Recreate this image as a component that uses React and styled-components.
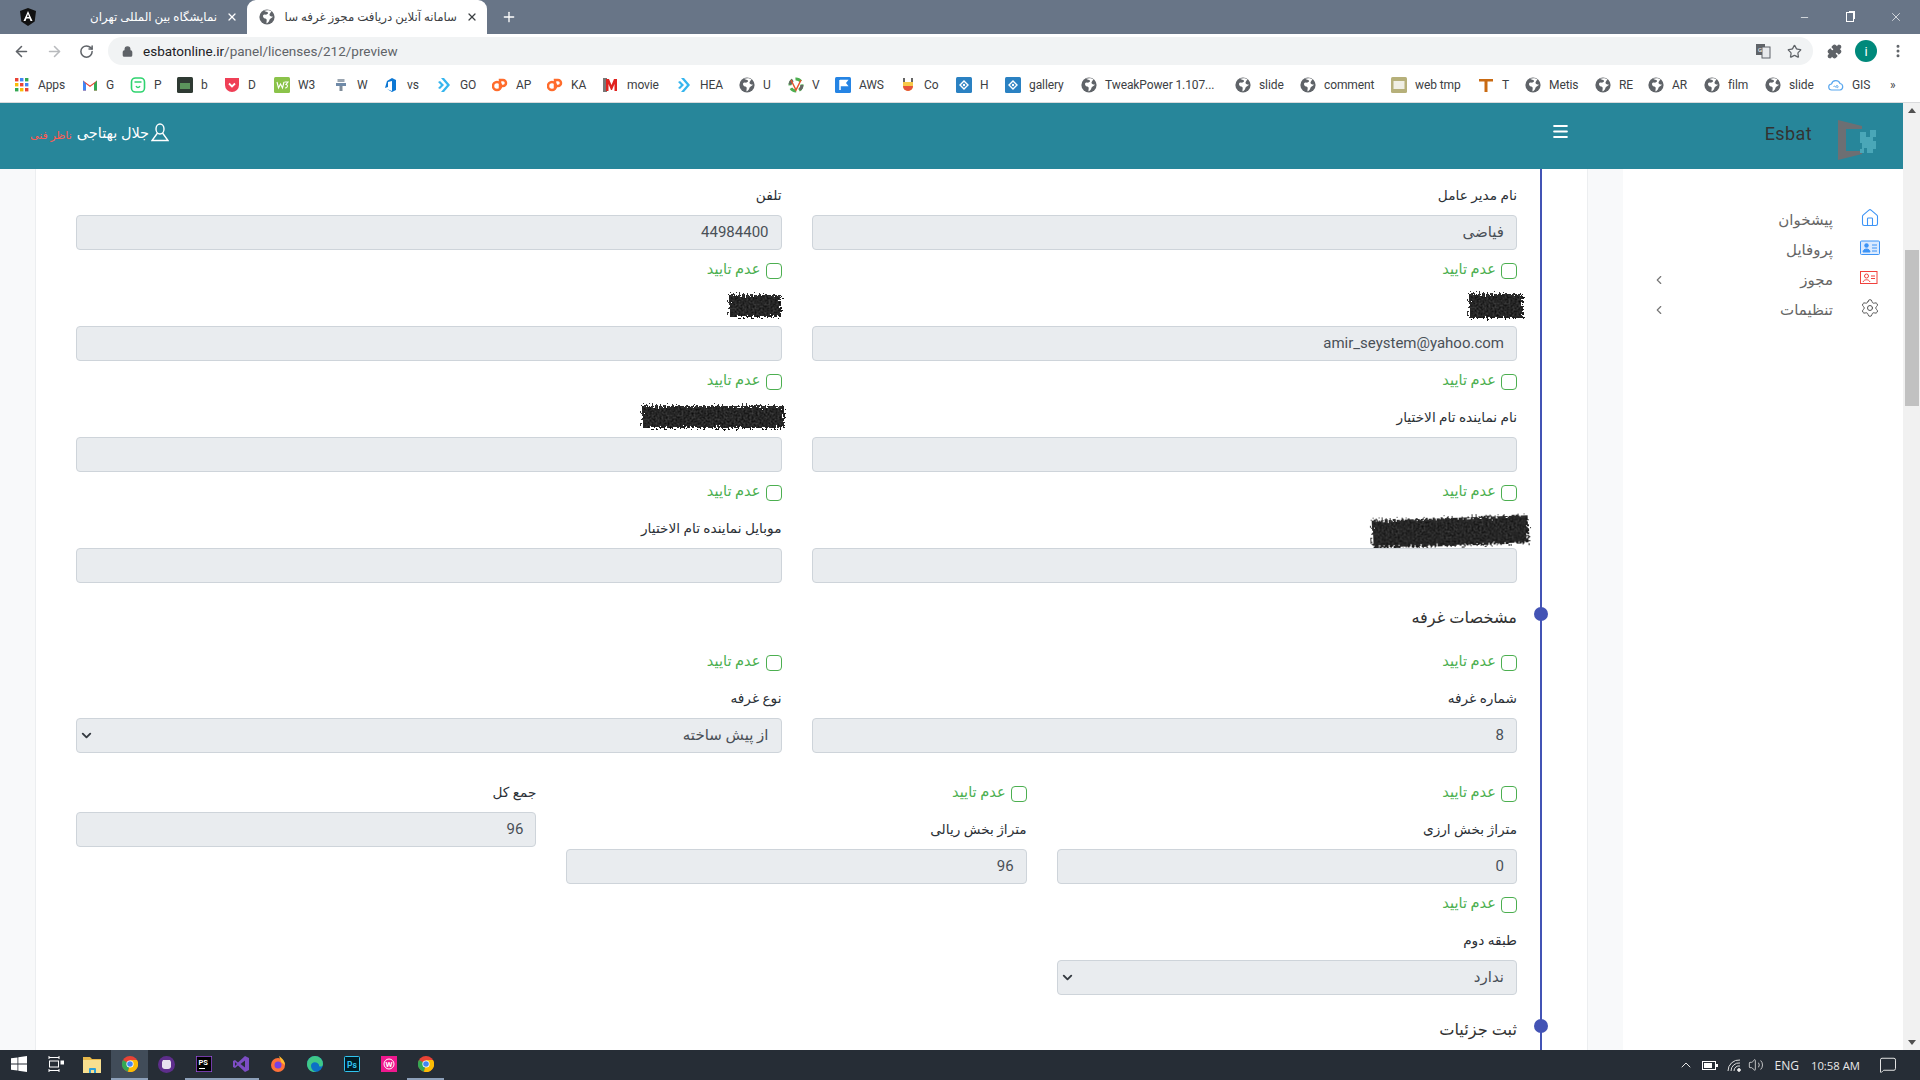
import React from "react";
import styled, { createGlobalStyle } from "styled-components";
import { ArrowLeft, ArrowRight, RotateCw, Lock, Star, Puzzle, EllipsisVertical, Plus, X, Minus, Menu, ChevronLeft, ChevronDown, ChevronUp, Settings, Home, Volume2, MessageSquare } from "lucide-react";

const Global = createGlobalStyle`
  html, body { margin: 0; padding: 0; background: #fff; overflow: hidden; }
  * { box-sizing: border-box; }
  body { font-family: Roboto, "DejaVu Sans", sans-serif; }
`;
const FA = `Roboto, "DejaVu Sans", sans-serif`;

const Screen = styled.div`width: 1920px; height: 1080px; display: flex; flex-direction: column; overflow: hidden;`;
const TabStrip = styled.div`height: 34px; background: #687587; display: flex; align-items: center; flex: none; color: #fff;`;
const Tab = styled.div`
  position: relative; width: ${p => p.$w}px; height: 34px; display: flex; align-items: center; padding: 0 9px 0 ${p => p.$pl}px; gap: 9px;
  border-radius: 9px 9px 0 0; background: ${p => p.$active ? "#fff" : "transparent"}; color: ${p => p.$active ? "#3c4043" : "#fff"};
`;
const TabTitle = styled.div`flex: 1; direction: rtl; white-space: nowrap; overflow: hidden; font: 11.8px ${FA}; text-align: right; line-height: 34px;`;
const NewTab = styled.div`margin-left: 13px; width: 18px; display: flex; justify-content: center;`;
const WindowControls = styled.div`margin-left: auto; display: flex; height: 34px; align-items: center; padding-right: 1px;`;
const WinBtn = styled.div`width: 46px; display: flex; justify-content: center; align-items: center;`;
const Restore = styled.div`width: 8px; height: 10px; border: 1px solid #fff; box-shadow: 2px -2px 0 -1px #fff;`;

const Toolbar = styled.div`height: 34px; flex: none; background: #fff; display: flex; align-items: center; padding-left: 13px; color: #5f6368;`;
const NavGroup = styled.div`display: flex; gap: 16px; width: 95px; align-items: center;`;
const Omnibox = styled.div`width: 1705px; height: 28px; border-radius: 14px; background: #f1f3f4; display: flex; align-items: center; padding: 0 11px 0 14px; font: 13.5px Roboto, sans-serif; color: #5f6368; gap: 10px;`;
const UrlHost = styled.span`color: #202124;`;
const OmniRight = styled.div`margin-left: auto; display: flex; gap: 16px; align-items: center;`;
const ToolRight = styled.div`display: flex; align-items: center; gap: 13px; margin-left: 14px;`;
const Avatar = styled.div`width: 22px; height: 22px; border-radius: 50%; background: #00897b; color: #fff; font: 13px Roboto, sans-serif; display: flex; align-items: center; justify-content: center;`;

const BookmarkBar = styled.div`height: 35px; flex: none; background: #fff; border-bottom: 1px solid #d9dadc; display: flex; align-items: center; padding: 0 0 1px 14px; font: 12px Roboto, sans-serif; color: #3c4043;`;
const Bookmark = styled.div`width: ${p => p.$w}px; flex: none; display: flex; align-items: center; gap: 8px; white-space: nowrap; overflow: hidden; letter-spacing: -0.1px;`;

const Viewport = styled.div`flex: 1; min-height: 0; display: flex;`;
const Page = styled.div`flex: 1; min-width: 0; display: flex; flex-direction: column;`;
const Header = styled.header`height: 66px; flex: none; background: #27869a; display: flex; align-items: flex-start; position: relative;`;
const UserBlock = styled.div`margin-left: 30px; margin-top: 18px; display: flex; align-items: center; gap: 2px; height: 22px;`;
const UserName = styled.span`direction: rtl; font: 14.5px ${FA}; color: #fff; display: inline-flex; gap: 5px; white-space: nowrap; padding-top: 3px;`;
const UserRole = styled.span`color: #ff5b52; font-size: 11px; align-self: flex-end;`;
const HeaderRight = styled.div`margin-left: auto; display: flex; align-items: center; height: 100%;`;
const Burger = styled.div`color: #fff; margin-right: 195px; margin-top: -9px; display: flex;`;
const Brand = styled.div`font: 18px Roboto, sans-serif; color: #333; letter-spacing: .4px; margin-right: 26px; margin-top: -6px;`;
const LogoBox = styled.div`margin-right: 25px; margin-top: 8px; display: flex;`;

const Body = styled.div`flex: 1; min-height: 0; display: flex; background: #f8f9fa; padding-left: 35px; overflow: hidden;`;
const Card = styled.main`width: 1553px; flex: none; background: #fff; border-left: 1px solid #eceef0; border-right: 1px solid #eceef0; padding: 0 45px 0 40px; height: 100%;`;
const Form = styled.div`direction: rtl; border-right: 2px solid #4353b5; padding: 5px 23px 0 0; height: 100%; width: 1466px; display: flex; flex-direction: column;`;
const Row = styled.div`display: grid; grid-template-columns: ${p => p.$cols === 3 ? "1fr 1fr 1fr" : "1fr 1fr"}; column-gap: 30px; margin-top: ${p => p.$gap || 0}px; flex: none;`;
const Column = styled.div`display: flex; flex-direction: column;`;
const CheckLine = styled.label`margin-top: 5px; height: 30px; display: flex; align-items: center; gap: 5px; color: #4caf50; font: 14.6px ${FA};`;
const CheckText = styled.span`margin-top: -3px;`;
const Box = styled.span`width: 16px; height: 16px; border: 1px solid #4caf50; border-radius: 4px; background: #fff; margin-top: 2px;`;
const Label = styled.div`margin-top: ${p => p.$compact ? 7 : 9}px; margin-bottom: 8px; height: 24px; font: 13.7px/24px ${FA}; color: #2b3036; display: flex; align-items: center;`;
const Input = styled.div`height: 35px; background: #e9ecef; border: 1px solid #ced4da; border-radius: 4px; padding: 0 12px 2px; display: flex; align-items: center; color: #495057; font: 15px ${FA}; position: relative;`;
const LtrValue = styled.span`direction: ltr;`;
const SelectArrow = styled.span`position: absolute; left: 2px; top: 9px; display: flex; color: #343a40;`;
const SectionTitle = styled.h3`position: relative; margin: 17px 0 6px; height: 36px; font: 400 16.2px/36px ${FA}; color: #333;`;
const Dot = styled.span`position: absolute; right: -31px; top: 7px; width: 14px; height: 14px; border-radius: 50%; background: #4353b5;`;
const ScribbleArt = styled.svg`flex: none; margin-right: ${p => p.$mr}px; transform: rotate(${p => p.$rot || 0}deg) translateY(${p => p.$dy || 0}px);`;

const Sidebar = styled.aside`flex: none; width: 280px; margin-left: 35px; background: #fff; padding: 36px 17px 0 29px; direction: rtl; height: 100%;`;
const NavItem = styled.div`height: 30px; display: flex; align-items: center; color: #666; font: 15px ${FA};`;
const NavIcon = styled.span`width: 26px; margin: 0 3px 5px 24px; display: flex; justify-content: center;`;
const NavChevron = styled.span`margin-right: auto; display: flex; color: #777;`;

const Scrollbar = styled.div`width: 17px; flex: none; background: #f1f1f1; display: flex; flex-direction: column; position: relative; align-items: center; justify-content: space-between; padding: 5px 0; color: #505050;`;
const Thumb = styled.div`position: absolute; left: 2px; right: 1px; top: 147px; height: 156px; background: #c1c1c1;`;
const Arrow = styled.div`width: 0; height: 0; border-left: 4px solid transparent; border-right: 4px solid transparent; ${p => p.$up ? "border-bottom: 5px solid #505050;" : "border-top: 5px solid #505050;"}`;

const Taskbar = styled.footer`height: 30px; flex: none; background: #262d36; display: flex; align-items: center; color: #fff;`;
const TaskBtn = styled.div`width: 37px; height: 30px; flex: none; display: flex; align-items: center; justify-content: center; background: ${p => p.$active ? "#414c59" : "transparent"}; border-bottom: 2px solid ${p => p.$running ? "#8da0b9" : "transparent"};`;
const Tray = styled.div`margin-left: auto; display: flex; align-items: center; font: 12px "Open Sans", Roboto, sans-serif; color: #e8e8e8; height: 100%;`;
const TrayItem = styled.span`display: flex; align-items: center; margin-left: ${p => p.$ml || 0}px; font-size: ${p => p.$fs || 12}px;`;

const Globe = ({ s = 16 }) => (
  <svg width={s} height={s} viewBox="0 0 16 16" style={{ flex: "none" }}>
    <circle cx="8" cy="8" r="7.6" fill="#5f6368" />
    <path d="M5 1.5c1 1.5 3.5 1 4 2.3S7 6 6 5.6 3.5 6 4.2 8s2.6 1 3.3 2.3-.6 3.5.3 4.2c1-.8 2.5-2 2.6-3.4s2-1.4 3.6-3.3c-1-.3-2.6-.2-3.3-1.3s.5-2.5 1.8-4c-2-1.6-5-1.7-7.5-.5z" fill="#fff" />
  </svg>
);
const Sq = ({ c, children }) => <svg width="16" height="16" viewBox="0 0 16 16" style={{ flex: "none" }}><rect width="16" height="16" rx="1.5" fill={c} />{children}</svg>;
const Svg = ({ children, s = 16, v = 16 }) => <svg width={s} height={s} viewBox={`0 0 ${v} ${v}`} style={{ flex: "none" }}>{children}</svg>;
const COLS = ["#ea4335", "#4285f4", "#34a853", "#fbbc05", "#ea4335", "#4285f4", "#34a853", "#fbbc05", "#ea4335"];

const ICONS = {
  apps: <Svg>{COLS.map((c, i) => <rect key={i} x={1 + (i % 3) * 5} y={1 + Math.floor(i / 3) * 5} width="3.4" height="3.4" fill={c} />)}</Svg>,
  gmail: <Svg><path d="M1 3.5v10h3V7l4 3 4-3v6.500h3v-10L8 8.500z" fill="#ea4335" /><path d="M1 3.500v10h3V7z" fill="#4285f4" /><path d="M12 7v6.500h3v-10z" fill="#34a853" /></Svg>,
  p: <Svg><rect x="1.500" y="1" width="13" height="14" rx="4" fill="none" stroke="#2fd36f" strokeWidth="1.600" /><path d="M4.500 5h7M6 9c1 2 3 2 4 0" stroke="#2fd36f" strokeWidth="1.300" fill="none" /></Svg>,
  b: <Sq c="#2f3a33"><rect x="3" y="6" width="10" height="6" fill="#6dbb6d" opacity=".7" /></Sq>,
  d: <Svg><path d="M1 1h14v7a7 7 0 0 1-14 0z" fill="#ef3f56" /><path d="M5 6.500l3 3 3-3" fill="none" stroke="#fff" strokeWidth="1.800" /></Svg>,
  w3: <Sq c="#8bc34a"><path d="M3 5l1.500 6 2-4 2 4L10 5M10.500 5H14l-2 2.500c2 0 2 3.500-1 3.500" fill="none" stroke="#fff" strokeWidth="1.100" /></Sq>,
  w: <Svg><rect x="4.500" y="2" width="7" height="3" fill="#9aa5b1" /><rect x="3" y="6" width="10" height="3" fill="#6f8aa8" /><rect x="6.500" y="9" width="3" height="5" fill="#7f8c99" /></Svg>,
  vs: <Svg><path d="M9 1L4 4 2 11l3-1V5l4-1v10l-5-2 5 3 4-2V3z" fill="#0d78d4" /></Svg>,
  go: <Svg><path d="M5 1l6 7-6 7 3 0 6-7-6-7zM2 5l3 3-3 3 2 1 4-4-4-4z" fill="#35b5ee" /></Svg>,
  cp: <Svg><circle cx="5" cy="9" r="4" fill="none" stroke="#ff6c2c" strokeWidth="2.500" /><path d="M8 11V3h3a3 3 0 0 1 0 6H9" fill="none" stroke="#ff6c2c" strokeWidth="2.500" /></Svg>,
  movie: <Svg><rect x="0" y="1" width="4" height="14" fill="#777" /><path d="M3 14V2h3l2.500 6L11 2h3v12h-2.500V7L9 13H8L5.500 7v7z" fill="#e0231f" /></Svg>,
  globe: <Globe />,
  v: <Svg><circle cx="8" cy="8" r="6" fill="none" stroke="#4caf50" strokeWidth="3" strokeDasharray="6 3" /><circle cx="8" cy="8" r="6" fill="none" stroke="#666" strokeWidth="3" strokeDasharray="5 14" /><path d="M3 3l5 10 5-10" fill="none" stroke="#e4572e" strokeWidth="1.500" /></Svg>,
  aws: <Sq c="#2584e4"><path d="M5 3v10M5 3.500h7l-2 2.500 2 2.500H5" stroke="#fff" strokeWidth="1.500" fill="#fff" /></Sq>,
  co: <Svg><path d="M3 5h10v4a5 5 0 0 1-10 0z" fill="#f7c948" /><path d="M3 9h10a5 5 0 0 1-10 0z" fill="#e5533d" /><path d="M4 1v4M12 1v4" stroke="#333" strokeWidth="1.500" /></Svg>,
  h: <Sq c="#2a81c2"><path d="M8 4l4 4-4 4-4-4z" fill="none" stroke="#fff" strokeWidth="1.400" /><circle cx="8" cy="8" r="1.200" fill="#fff" /></Sq>,
  css: <Sq c="#b6b07a"><rect x="2.500" y="4" width="11" height="8" fill="#fff" opacity=".8" /></Sq>,
  t: <Svg><path d="M1 2h14v2.500H9.500V15h-3V4.500H1z" fill="#c96a12" /></Svg>,
  gis: <Svg><path d="M4 13a3 3 0 0 1-.5-6A4.500 4.500 0 0 1 12 6.500 3.300 3.300 0 0 1 12 13z" fill="none" stroke="#5aa7ee" strokeWidth="1.200" /><path d="M5.500 9.500c1-1.500 2 1.500 2.500 0s1.500-1.500 2 0-1.500 1.500-2 0" fill="none" stroke="#5aa7ee" /></Svg>,
};

const BOOKMARKS = [
  ["apps", "Apps", 68], ["gmail", "G", 48], ["p", "P", 47], ["b", "b", 47], ["d", "D", 50], ["w3", "W3", 59], ["w", "W", 50],
  ["vs", "vs", 53], ["go", "GO", 56], ["cp", "AP", 55], ["cp", "KA", 56], ["movie", "movie", 73], ["go", "HEA", 63], ["globe", "U", 49],
  ["v", "V", 47], ["aws", "AWS", 65], ["co", "Co", 56], ["h", "H", 49], ["h", "gallery", 76], ["globe", "TweakPower 1.107...", 154],
  ["globe", "slide", 65], ["globe", "comment", 91], ["css", "web tmp", 87], ["t", "T", 47], ["globe", "Metis", 70], ["globe", "RE", 53],
  ["globe", "AR", 56], ["globe", "film", 61], ["globe", "slide", 63], ["gis", "GIS", 62],
];

const Scribble = ({ id, w, h, mr = 0, rot, dy }) => (
  <ScribbleArt width={w} height={h} viewBox={`0 0 ${w} ${h}`} $mr={mr} $rot={rot} $dy={dy}>
    <defs>
      <filter id={id} x="-5%" y="-30%" width="110%" height="160%">
        <feTurbulence type="fractalNoise" baseFrequency="0.5" numOctaves="2" seed="4" result="n" />
        <feDisplacementMap in="SourceGraphic" in2="n" scale="11" result="d" />
        <feComposite in="d" in2="n" operator="arithmetic" k1="0" k2="1" k3="-0.3" k4="0" />
        <feGaussianBlur stdDeviation="0.7" />
      </filter>
    </defs>
    <rect x="4" y="5" width={w - 8} height={h - 10} fill="#000" filter={`url(#${id})`} />
  </ScribbleArt>
);

const Check = () => <CheckLine><Box /><CheckText>عدم تایید</CheckText></CheckLine>;

const Field = ({ label, value, ltr, check = true, select, scribble, compact }) => (
  <Column>
    {check && <Check />}
    <Label $compact={compact}>{scribble || label}</Label>
    <Input>
      {ltr ? <LtrValue>{value}</LtrValue> : value}
      {select && <SelectArrow><ChevronDown size={15} strokeWidth={3} /></SelectArrow>}
    </Input>
  </Column>
);

const Logo = () => (
  <svg width="40" height="40" viewBox="0 0 40 40">
    <path d="M0 0l24 6v3H8v22h16v3L0 40z" fill="#6d6f73" />
    <path d="M22 12h6v5h4v-7h6v7h-3v4h3v8h-3v4h-6v-5h-3v5h-4v-4h2v-6h-2z" fill="#4aa7b8" />
  </svg>
);

const CardIcon = ({ color, person }) => (
  <svg width="20" height={person ? 14 : 16} viewBox={person ? "0 0 20 14" : "0 0 20 16"}>
    {person ? <>
      <rect x=".5" y=".5" width="16.500" height="12" fill="none" stroke={color} />
      <circle cx="6.500" cy="5" r="2" fill="none" stroke={color} />
      <path d="M3 11c1-3 6-3 7 0M11 5h4M11 7.500h4" fill="none" stroke={color} />
    </> : <>
      <rect x=".5" y="1" width="19" height="13.500" rx="1" fill="#dbeafe" stroke={color} />
      <circle cx="6.500" cy="5.500" r="2.200" fill={color} />
      <path d="M3 12c0-4 7-4 7 0zM12 5h5M12 8h5M12 11h5" fill={color} stroke={color} />
    </>}
  </svg>
);

const Chrome = () => (
  <svg width="16" height="16" viewBox="0 0 16 16">
    <circle cx="8" cy="8" r="8" fill="#ea4335" />
    <path d="M8 8L1 4A8 8 0 0 0 6 15.800z" fill="#34a853" />
    <path d="M8 8l-2 7.800A8 8 0 0 0 15 4H8z" fill="#fbbc05" />
    <circle cx="8" cy="8" r="3.600" fill="#fff" /><circle cx="8" cy="8" r="2.800" fill="#4285f4" />
  </svg>
);

const TASK = [
  { k: "folder", el: <svg width="20" height="17" viewBox="0 0 20 17"><path d="M0 1h7l2 2h9v3H0z" fill="#e8b94a" /><rect y="4" width="18" height="13" fill="#f8df8f" /><path d="M6 17v-4a1 1 0 0 1 1-1h5a1 1 0 0 1 1 1v4h-2v-3H8v3z" fill="#2d9fd8" /></svg> },
  { k: "chrome", active: true, running: true, el: <Chrome /> },
  { k: "tor", el: <svg width="17" height="17" viewBox="0 0 17 17"><circle cx="8.500" cy="8.500" r="8.500" fill="#5e2e8c" /><path d="M4 6l1-2h7l1 2v5a3 3 0 0 1-3 2H7a3 3 0 0 1-3-2z" fill="#e6e1ee" /></svg> },
  { k: "php", running: true, el: <svg width="16" height="16" viewBox="0 0 16 16"><rect width="16" height="16" fill="#000" stroke="#9a4fe0" strokeWidth="1.500" /><text x="2.500" y="9" fontSize="7.500" fontFamily="Roboto" fontWeight="700" fill="#fff">PS</text><rect x="3" y="12" width="6" height="1" fill="#fff" /></svg> },
  { k: "vs", running: true, el: <svg width="16" height="16" viewBox="0 0 16 16"><path d="M12 0l4 2v12l-4 2L5 9.500 2 12 0 11V5l2-1 3 2.500z" fill="#7c4dc4" /><path d="M12 4.500L7.500 8l4.500 3.500z" fill="#262d36" /><path d="M2 6l2 2-2 2z" fill="#262d36" /></svg> },
  { k: "ff", el: <svg width="16" height="16" viewBox="0 0 16 16"><circle cx="8" cy="9" r="7" fill="#ff7139" /><circle cx="8" cy="9" r="3.500" fill="#7542e5" /><path d="M9 0c3 2 6 5 6 9l-4-3c0-2-1-3-2-6z" fill="#ffbd2e" /></svg> },
  { k: "edge", el: <svg width="16" height="16" viewBox="0 0 16 16"><circle cx="8" cy="8" r="8" fill="#0c70c6" /><path d="M0 8a8 8 0 0 1 16 0c0 3-3 3-4 2 1-4-8-6-8 0 0 3 3 6 6 6C4 17 0 13 0 8z" fill="#3fc888" /></svg> },
  { k: "ps", el: <svg width="16" height="16" viewBox="0 0 16 16"><rect x=".5" y=".5" width="15" height="15" rx="1" fill="#001d26" stroke="#31c5f0" /><text x="3" y="11.500" fontSize="8.500" fontFamily="Roboto" fontWeight="700" fill="#31c5f0">Ps</text></svg> },
  { k: "wamp", el: <svg width="16" height="16" viewBox="0 0 16 16"><rect width="16" height="16" fill="#f0188f" /><circle cx="8" cy="8" r="5" fill="none" stroke="#fff" /><text x="4.500" y="11" fontSize="8" fontFamily="Roboto" fontWeight="700" fill="#fff">W</text></svg> },
  { k: "chrome2", running: true, el: <Chrome /> },
];

export default function App() {
  return (
    <Screen>
      <Global />
      <TabStrip>
        <Tab $w={247} $pl={20}>
          <svg width="16" height="18" viewBox="0 0 16 18"><path d="M8 0l8 3-1.300 10.500L8 18l-6.700-4.500L0 3z" fill="#111" /><path d="M8 3L3.500 13h2l1-2.500h3l1 2.500h2zM7 9l1-3 1 3z" fill="#fff" /></svg>
          <TabTitle>نمایشگاه بین المللی تهران</TabTitle>
          <X size={12} strokeWidth={2.500} />
        </Tab>
        <Tab $w={240} $active $pl={12}>
          <Globe />
          <TabTitle>سامانه آنلاین دریافت مجوز غرفه سا</TabTitle>
          <X size={12} strokeWidth={2.500} />
        </Tab>
        <NewTab><Plus size={16} strokeWidth={2} /></NewTab>
        <WindowControls>
          <WinBtn><Minus size={11} strokeWidth={1.500} /></WinBtn>
          <WinBtn><Restore /></WinBtn>
          <WinBtn><X size={14} strokeWidth={1.200} /></WinBtn>
        </WindowControls>
      </TabStrip>

      <Toolbar>
        <NavGroup>
          <ArrowLeft size={17} strokeWidth={2.200} />
          <ArrowRight size={17} strokeWidth={2.200} color="#b8babd" />
          <RotateCw size={15} strokeWidth={2.400} />
        </NavGroup>
        <Omnibox>
          <Lock size={11} strokeWidth={3} fill="#5f6368" />
          <span><UrlHost>esbatonline.ir</UrlHost>/panel/licenses/212/preview</span>
          <OmniRight>
            <svg width="16" height="16" viewBox="0 0 16 16"><rect x="1" y="1" width="9" height="11" fill="#5f6368" /><rect x="7" y="4" width="8" height="11" fill="#e8eaed" stroke="#5f6368" /><text x="3" y="9" fontSize="6" fill="#fff" fontFamily="Roboto">G</text></svg>
            <Star size={15} strokeWidth={2} />
          </OmniRight>
        </Omnibox>
        <ToolRight>
          <Puzzle size={15} fill="#5f6368" />
          <Avatar>i</Avatar>
          <EllipsisVertical size={16} strokeWidth={2.500} />
        </ToolRight>
      </Toolbar>

      <BookmarkBar>
        {BOOKMARKS.map(([icon, text, w], i) => (
          <Bookmark key={i} $w={w}>{ICONS[icon]}<span>{text}</span></Bookmark>
        ))}
        <span>»</span>
      </BookmarkBar>

      <Viewport>
        <Page>
          <Header>
            <UserBlock>
              <UserName><span>جلال بهتاجی</span><UserRole>ناظر فنی</UserRole></UserName>
              <svg width="18" height="19" viewBox="0 0 18 19" fill="none" stroke="#fff" strokeWidth="1.400"><ellipse cx="9" cy="6" rx="4" ry="5" /><path d="M6.500 10L1 17.500h16L11.500 10" /></svg>
            </UserBlock>
            <HeaderRight>
              <Burger><Menu size={19} strokeWidth={2.600} /></Burger>
              <Brand>Esbat</Brand>
              <LogoBox><Logo /></LogoBox>
            </HeaderRight>
          </Header>
          <Body>
            <Card>
              <Form>
                <Row>
                  <Field check={false} label="نام مدیر عامل" value="فیاضی" />
                  <Field check={false} label="تلفن" value="44984400" ltr />
                </Row>
                <Row>
                  <Field scribble={<Scribble id="s1" w={62} h={34} mr={-10} />} value="amir_seystem@yahoo.com" ltr />
                  <Field scribble={<Scribble id="s2" w={60} h={32} mr={-3} />} value="" />
                </Row>
                <Row>
                  <Field label="نام نماینده تام الاختیار" value="" />
                  <Field scribble={<Scribble id="s3" w={150} h={32} mr={-6} />} value="" />
                </Row>
                <Row>
                  <Field scribble={<Scribble id="s4" w={164} h={38} mr={-15} rot={-2} dy={4} />} value="" />
                  <Field label="موبایل نماینده تام الاختیار" value="" />
                </Row>
                <SectionTitle>مشخصات غرفه<Dot /></SectionTitle>
                <Row>
                  <Field label="شماره غرفه" value="8" ltr />
                  <Field label="نوع غرفه" value="از پیش ساخته" select />
                </Row>
                <Row $cols={3} $gap={20}>
                  <Column>
                    <Field label="متراژ بخش ارزی" value="0" ltr />
                    <Field label="طبقه دوم" value="ندارد" select />
                  </Column>
                  <Column>
                    <Field label="متراژ بخش ریالی" value="96" ltr />
                  </Column>
                  <Column>
                    <Field check={false} compact label="جمع کل" value="96" ltr />
                  </Column>
                </Row>
                <SectionTitle>ثبت جزئیات<Dot /></SectionTitle>
              </Form>
            </Card>
            <Sidebar>
              <NavItem><NavIcon><Home size={20} strokeWidth={1.300} color="#3d94f6" /></NavIcon>پیشخوان</NavItem>
              <NavItem><NavIcon><CardIcon color="#3d94f6" /></NavIcon>پروفایل</NavItem>
              <NavItem><NavIcon><CardIcon color="#f0413c" person /></NavIcon>مجوز<NavChevron><ChevronLeft size={14} /></NavChevron></NavItem>
              <NavItem><NavIcon><Settings size={20} strokeWidth={1.200} color="#555" /></NavIcon>تنظیمات<NavChevron><ChevronLeft size={14} /></NavChevron></NavItem>
            </Sidebar>
          </Body>
        </Page>
        <Scrollbar><Arrow $up /><Thumb /><Arrow /></Scrollbar>
      </Viewport>

      <Taskbar>
        <TaskBtn>
          <svg width="16" height="16" viewBox="0 0 16 16" fill="#fff"><path d="M0 2.300l6.500-.9v6.200H0zM7.300 1.300L16 0v7.600H7.300zM0 8.400h6.500v6.200L0 13.700zM7.300 8.400H16V16l-8.700-1.200z" /></svg>
        </TaskBtn>
        <TaskBtn>
          <svg width="16" height="16" viewBox="0 0 16 16" fill="none" stroke="#fff"><path d="M1 1.500h10M1 14.500h10M1 0v3M11 0v3M1 13v3M11 13v3" /><rect x="1.500" y="5" width="9" height="6" /><rect x="13" y="5" width="3" height="3" fill="#fff" /></svg>
        </TaskBtn>
        {TASK.map(t => <TaskBtn key={t.k} $active={t.active} $running={t.running}>{t.el}</TaskBtn>)}
        <Tray>
          <TrayItem><ChevronUp size={16} strokeWidth={1.500} /></TrayItem>
          <TrayItem $ml={8}><svg width="16" height="9" viewBox="0 0 16 9"><rect x=".5" y=".5" width="13" height="8" fill="none" stroke="#fff" /><rect x="2" y="2" width="8" height="5" fill="#fff" /><rect x="14" y="3" width="2" height="3" fill="#fff" /></svg></TrayItem>
          <TrayItem $ml={9}><svg width="14" height="13" viewBox="0 0 14 13" fill="none" stroke="#ddd"><path d="M1 12A11 11 0 0 1 13 1M4 12a8 8 0 0 1 9-8M7 12a5 5 0 0 1 6-5" /><circle cx="12" cy="11" r="1.400" fill="#fff" /></svg></TrayItem>
          <TrayItem $ml={7}><Volume2 size={16} strokeWidth={1.200} /></TrayItem>
          <TrayItem $ml={11}>ENG</TrayItem>
          <TrayItem $ml={12} $fs={11.3}>10:58 AM</TrayItem>
          <TrayItem $ml={19}><MessageSquare size={18} strokeWidth={1.300} /></TrayItem>
          <TrayItem $ml={23} />
        </Tray>
      </Taskbar>
    </Screen>
  );
}
